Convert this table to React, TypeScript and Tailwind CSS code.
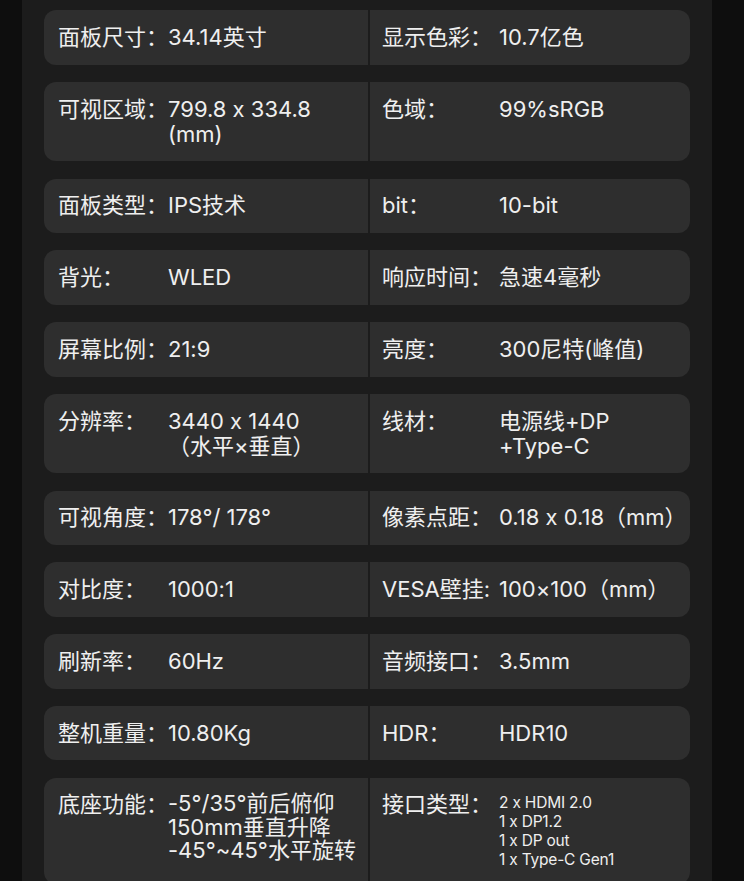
type Cell = {
  label: string
  value: string[]
  small?: boolean
  leading?: string
}

const rows: [Cell, Cell][] = [
  [
    { label: '面板尺寸：', value: ['34.14英寸'] },
    { label: '显示色彩：', value: ['10.7亿色'] },
  ],
  [
    { label: '可视区域：', value: ['799.8 x 334.8', '(mm)'] },
    { label: '色域：', value: ['99%sRGB'] },
  ],
  [
    { label: '面板类型：', value: ['IPS技术'] },
    { label: 'bit：', value: ['10-bit'] },
  ],
  [
    { label: '背光：', value: ['WLED'] },
    { label: '响应时间：', value: ['急速4毫秒'] },
  ],
  [
    { label: '屏幕比例：', value: ['21:9'] },
    { label: '亮度：', value: ['300尼特(峰值)'] },
  ],
  [
    { label: '分辨率：', value: ['3440 x 1440', '（水平×垂直）'] },
    { label: '线材：', value: ['电源线+DP', '+Type-C'] },
  ],
  [
    { label: '可视角度：', value: ['178°/ 178°'] },
    { label: '像素点距：', value: ['0.18 x 0.18（mm）'] },
  ],
  [
    { label: '对比度：', value: ['1000:1'] },
    { label: 'VESA壁挂:', value: ['100×100（mm）'] },
  ],
  [
    { label: '刷新率：', value: ['60Hz'] },
    { label: '音频接口：', value: ['3.5mm'] },
  ],
  [
    { label: '整机重量：', value: ['10.80Kg'] },
    { label: 'HDR：', value: ['HDR10'] },
  ],
  [
    { label: '底座功能：', value: ['-5°/35°前后俯仰', '150mm垂直升降', '-45°~45°水平旋转'], leading: 'leading-[23.5px]' },
    { label: '接口类型：', value: ['2 x HDMI 2.0', '1 x DP1.2', '1 x DP out', '1 x Type-C Gen1'], small: true },
  ],
]

function SpecCell({ cell, side }: { cell: Cell; side: 'left' | 'right' }) {
  const isLeft = side === 'left'
  return (
    <div
      className={`flex items-start bg-[#2e2e2e] py-[14.75px] ${
        isLeft ? 'rounded-l-[12px] pl-[14px]' : 'rounded-r-[12px] pl-[12px]'
      }`}
    >
      <span className={`shrink-0 whitespace-nowrap leading-[25px] ${isLeft ? 'w-[110px]' : 'w-[117px]'}`}>
        {cell.label}
      </span>
      {cell.small ? (
        <div className="flex flex-col pt-[1px] text-[15.5px] leading-[19px] tracking-[-0.2px]">
          {cell.value.map((line) => (
            <span key={line} className="whitespace-nowrap">{line}</span>
          ))}
        </div>
      ) : (
        <div className={`flex flex-col ${cell.leading ?? 'leading-[25px]'}`}>
          {cell.value.map((line) => (
            <span key={line} className="whitespace-nowrap">{line}</span>
          ))}
        </div>
      )}
    </div>
  )
}

export default function App() {
  return (
    <div className="min-h-screen w-full bg-[#0e0e0e] font-['Inter','Noto_Sans_CJK_SC',sans-serif] text-[22px] text-[#efefef] proportional-nums [font-feature-settings:'calt'_0]">
      <div className="ml-[22px] w-[690px] min-h-screen bg-[#1c1c1c] px-[22px] pt-[10px] pb-[20px]">
        <div className="flex flex-col gap-[17.25px]">
          {rows.map(([left, right]) => (
            <div key={left.label} className="grid grid-cols-[324px_320px] gap-x-[2px]">
              <SpecCell cell={left} side="left" />
              <SpecCell cell={right} side="right" />
            </div>
          ))}
        </div>
      </div>
    </div>
  )
}
